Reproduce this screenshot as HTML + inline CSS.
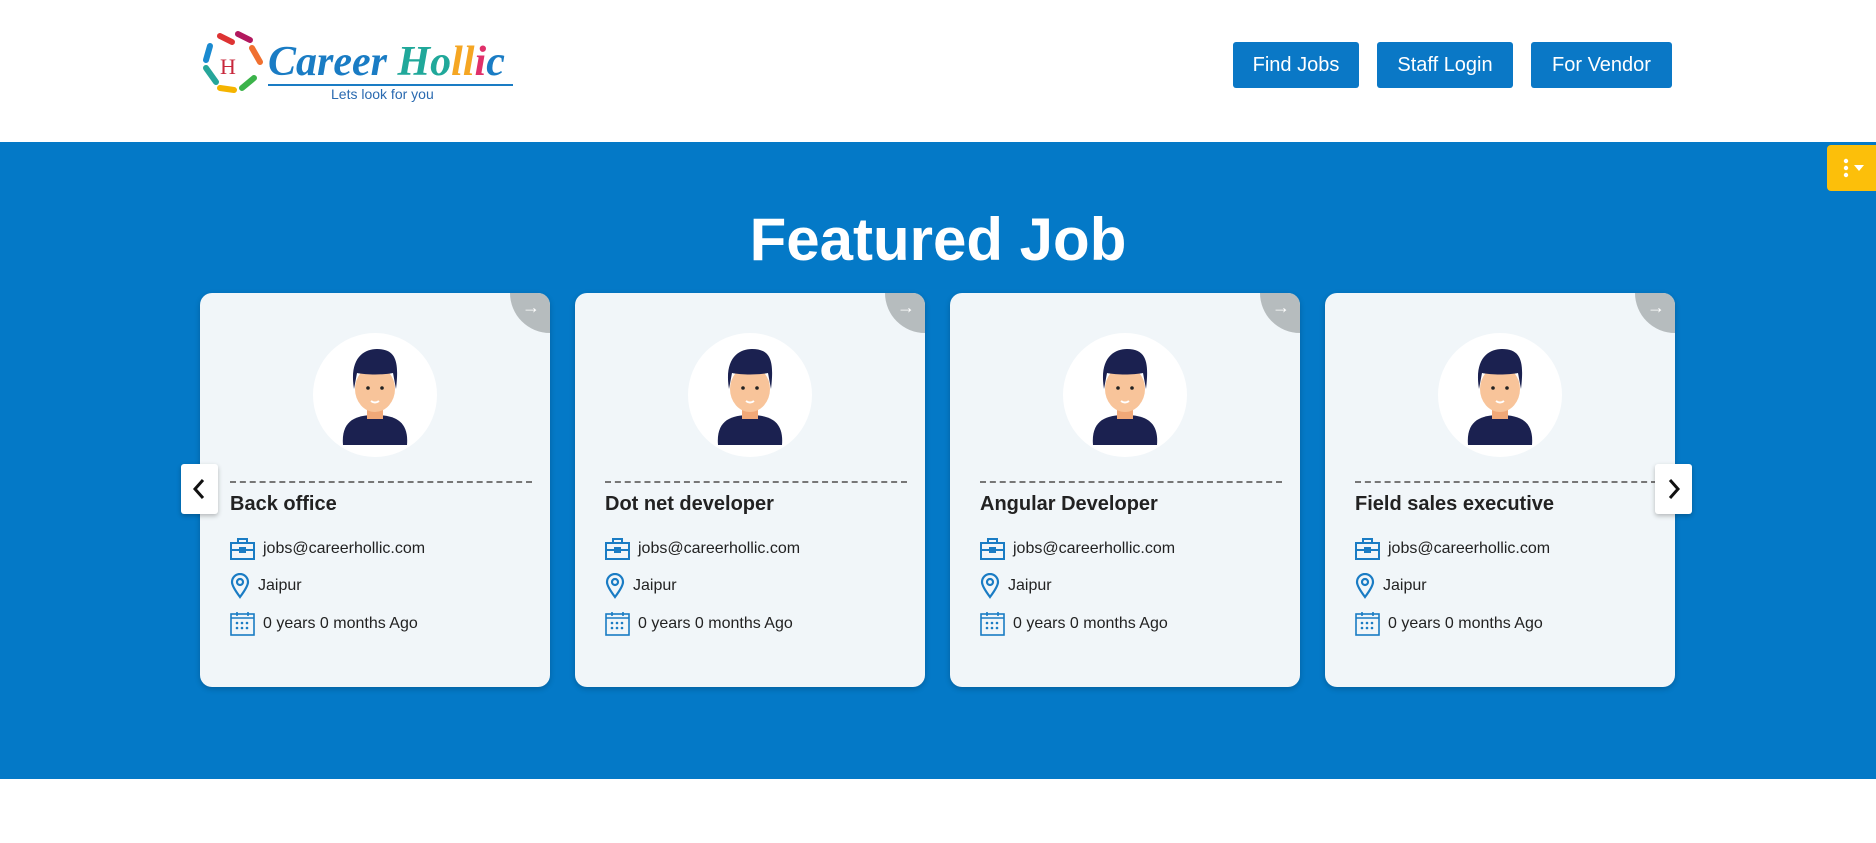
<!DOCTYPE html>
<html><head><style>
*{margin:0;padding:0;box-sizing:border-box}
body{width:1876px;height:843px;background:#fff;font-family:"Liberation Sans",sans-serif;position:relative;overflow:hidden}
.btn{position:absolute;top:42px;height:46px;background:#0a78c6;color:#fff;font-size:20px;line-height:46px;text-align:center;border-radius:3px}
.band{position:absolute;left:0;top:142px;width:1876px;height:637px;background:#0479c7}
h1{position:absolute;top:205px;left:0;width:1876px;text-align:center;color:#fff;font-size:60px;font-weight:bold}
.card{position:absolute;top:293px;width:350px;height:394px;background:#f1f6f9;border-radius:12px;overflow:hidden;box-shadow:0 2px 6px rgba(0,0,0,.2)}
.corner{position:absolute;right:-40px;top:-40px;width:80px;height:80px;border-radius:50%;background:#b6bcbe;color:#fff}
.corner span{position:absolute;left:12px;top:44px;font-size:18px}
.av{position:absolute;left:113px;top:40px;width:124px;height:124px;border-radius:50%;background:#fff}
.dash{position:absolute;left:30px;top:188px;width:302px;border-top:2px dashed #777}
.t{position:absolute;left:30px;top:200px;font-size:20px;font-weight:bold;color:#222}
.r{position:absolute;left:30px;font-size:16px;color:#222;display:flex;align-items:center}
.r svg{margin-right:8px}
.nav{position:absolute;top:464px;width:37px;height:50px;background:#fff;border-radius:3px;box-shadow:0 2px 5px rgba(0,0,0,.25)}
</style></head><body>
<div style="position:absolute;left:200px;top:26px;width:320px;height:76px">
<svg width="66" height="72" viewBox="0 0 66 72" style="position:absolute;left:0;top:2px">
<g stroke-width="6" stroke-linecap="round" fill="none">
<path d="M20 8 L32 14" stroke="#d33"/><path d="M38 6 L50 12" stroke="#b2185e"/><path d="M52 20 L60 34" stroke="#f07030"/>
<path d="M10 18 L6 32" stroke="#1a8ad0"/><path d="M6 40 L16 54" stroke="#26a69a"/><path d="M20 60 L34 62" stroke="#f5b400"/><path d="M42 60 L54 50" stroke="#3bb34a"/>
</g><text x="20" y="46" font-size="22" fill="#c8283c" font-family="Liberation Serif">H</text></svg>
<div style="position:absolute;left:68px;top:12px;font-family:'Liberation Serif',serif;font-size:42px;font-weight:bold;font-style:italic;color:#1a7cc4;white-space:nowrap">Career <span style="color:#20a89a">H</span><span style="color:#20a89a">o</span><span style="color:#f5a623">ll</span><span style="color:#e0306a">i</span>c</div>
<div style="position:absolute;left:68px;top:58px;width:245px;height:2px;background:#1a7cc4"></div>
<div style="position:absolute;left:131px;top:60px;font-size:14px;color:#2a6ab0">Lets look for you</div>
</div>
<div class="btn" style="left:1233px;width:126px">Find Jobs</div>
<div class="btn" style="left:1377px;width:136px">Staff Login</div>
<div class="btn" style="left:1531px;width:141px">For Vendor</div>
<div class="band"></div>
<div style="position:absolute;left:1827px;top:145px;width:49px;height:46px;background:#fcbf0a;border-radius:4px 0 0 4px"><svg width="49" height="46" viewBox="0 0 49 46"><g fill="#fff"><circle cx="19" cy="16" r="2.2"/><circle cx="19" cy="23" r="2.2"/><circle cx="19" cy="30" r="2.2"/><path d="M27 20 H37 L32 26 Z"/></g></svg></div>
<h1>Featured Job</h1>

<div class="card" style="left:200px"><div class="corner"><span>→</span></div><div class="av"><svg width="124" height="124" viewBox="0 0 124 124"><path d="M30 112 C28 88 42 82 62 82 C82 82 96 88 94 112 Z" fill="#1b2150"/><rect x="54" y="70" width="16" height="16" fill="#f0a878"/><ellipse cx="62" cy="56" rx="20" ry="23" fill="#f8c49a"/><path d="M41 56 C36 26 50 16 64 16 C84 16 86 30 83 56 L80 40 C70 42 54 42 44 40 Z" fill="#1b2150"/><circle cx="55" cy="55" r="1.8" fill="#222"/><circle cx="69" cy="55" r="1.8" fill="#222"/><path d="M58 68 Q62 71 66 68" stroke="#fff" stroke-width="2" fill="none"/></svg></div><div class="dash"></div><div class="t">Back office</div>
<div class="r" style="top:245px"><svg width="25" height="22" viewBox="0 0 25 22" fill="none" stroke="#1a7cc4" stroke-width="2"><rect x="1" y="5" width="23" height="16"/><rect x="8" y="1" width="9" height="4"/><path d="M1 12 H24"/><rect x="10" y="10" width="5" height="4" fill="#1a7cc4"/></svg>jobs@careerhollic.com</div>
<div class="r" style="top:280px"><svg width="20" height="26" viewBox="0 0 20 26" fill="none" stroke="#1a7cc4" stroke-width="2.2"><path d="M10 24 C4 16 2 12 2 9 A8 8 0 0 1 18 9 C18 12 16 16 10 24Z"/><circle cx="10" cy="9" r="3"/></svg>Jaipur</div>
<div class="r" style="top:318px"><svg width="25" height="25" viewBox="0 0 25 25" fill="none" stroke="#1a7cc4" stroke-width="1.6"><rect x="1" y="3" width="23" height="21"/><path d="M7 1v4M18 1v4M1 7h23"/><g fill="#1a7cc4" stroke="none"><circle cx="7" cy="12" r="1.3"/><circle cx="12" cy="12" r="1.3"/><circle cx="17" cy="12" r="1.3"/><circle cx="7" cy="17" r="1.3"/><circle cx="12" cy="17" r="1.3"/><circle cx="17" cy="17" r="1.3"/></g></svg>0 years 0 months Ago</div></div>

<div class="card" style="left:575px"><div class="corner"><span>→</span></div><div class="av"><svg width="124" height="124" viewBox="0 0 124 124"><path d="M30 112 C28 88 42 82 62 82 C82 82 96 88 94 112 Z" fill="#1b2150"/><rect x="54" y="70" width="16" height="16" fill="#f0a878"/><ellipse cx="62" cy="56" rx="20" ry="23" fill="#f8c49a"/><path d="M41 56 C36 26 50 16 64 16 C84 16 86 30 83 56 L80 40 C70 42 54 42 44 40 Z" fill="#1b2150"/><circle cx="55" cy="55" r="1.8" fill="#222"/><circle cx="69" cy="55" r="1.8" fill="#222"/><path d="M58 68 Q62 71 66 68" stroke="#fff" stroke-width="2" fill="none"/></svg></div><div class="dash"></div><div class="t">Dot net developer</div>
<div class="r" style="top:245px"><svg width="25" height="22" viewBox="0 0 25 22" fill="none" stroke="#1a7cc4" stroke-width="2"><rect x="1" y="5" width="23" height="16"/><rect x="8" y="1" width="9" height="4"/><path d="M1 12 H24"/><rect x="10" y="10" width="5" height="4" fill="#1a7cc4"/></svg>jobs@careerhollic.com</div>
<div class="r" style="top:280px"><svg width="20" height="26" viewBox="0 0 20 26" fill="none" stroke="#1a7cc4" stroke-width="2.2"><path d="M10 24 C4 16 2 12 2 9 A8 8 0 0 1 18 9 C18 12 16 16 10 24Z"/><circle cx="10" cy="9" r="3"/></svg>Jaipur</div>
<div class="r" style="top:318px"><svg width="25" height="25" viewBox="0 0 25 25" fill="none" stroke="#1a7cc4" stroke-width="1.6"><rect x="1" y="3" width="23" height="21"/><path d="M7 1v4M18 1v4M1 7h23"/><g fill="#1a7cc4" stroke="none"><circle cx="7" cy="12" r="1.3"/><circle cx="12" cy="12" r="1.3"/><circle cx="17" cy="12" r="1.3"/><circle cx="7" cy="17" r="1.3"/><circle cx="12" cy="17" r="1.3"/><circle cx="17" cy="17" r="1.3"/></g></svg>0 years 0 months Ago</div></div>

<div class="card" style="left:950px"><div class="corner"><span>→</span></div><div class="av"><svg width="124" height="124" viewBox="0 0 124 124"><path d="M30 112 C28 88 42 82 62 82 C82 82 96 88 94 112 Z" fill="#1b2150"/><rect x="54" y="70" width="16" height="16" fill="#f0a878"/><ellipse cx="62" cy="56" rx="20" ry="23" fill="#f8c49a"/><path d="M41 56 C36 26 50 16 64 16 C84 16 86 30 83 56 L80 40 C70 42 54 42 44 40 Z" fill="#1b2150"/><circle cx="55" cy="55" r="1.8" fill="#222"/><circle cx="69" cy="55" r="1.8" fill="#222"/><path d="M58 68 Q62 71 66 68" stroke="#fff" stroke-width="2" fill="none"/></svg></div><div class="dash"></div><div class="t">Angular Developer</div>
<div class="r" style="top:245px"><svg width="25" height="22" viewBox="0 0 25 22" fill="none" stroke="#1a7cc4" stroke-width="2"><rect x="1" y="5" width="23" height="16"/><rect x="8" y="1" width="9" height="4"/><path d="M1 12 H24"/><rect x="10" y="10" width="5" height="4" fill="#1a7cc4"/></svg>jobs@careerhollic.com</div>
<div class="r" style="top:280px"><svg width="20" height="26" viewBox="0 0 20 26" fill="none" stroke="#1a7cc4" stroke-width="2.2"><path d="M10 24 C4 16 2 12 2 9 A8 8 0 0 1 18 9 C18 12 16 16 10 24Z"/><circle cx="10" cy="9" r="3"/></svg>Jaipur</div>
<div class="r" style="top:318px"><svg width="25" height="25" viewBox="0 0 25 25" fill="none" stroke="#1a7cc4" stroke-width="1.6"><rect x="1" y="3" width="23" height="21"/><path d="M7 1v4M18 1v4M1 7h23"/><g fill="#1a7cc4" stroke="none"><circle cx="7" cy="12" r="1.3"/><circle cx="12" cy="12" r="1.3"/><circle cx="17" cy="12" r="1.3"/><circle cx="7" cy="17" r="1.3"/><circle cx="12" cy="17" r="1.3"/><circle cx="17" cy="17" r="1.3"/></g></svg>0 years 0 months Ago</div></div>

<div class="card" style="left:1325px"><div class="corner"><span>→</span></div><div class="av"><svg width="124" height="124" viewBox="0 0 124 124"><path d="M30 112 C28 88 42 82 62 82 C82 82 96 88 94 112 Z" fill="#1b2150"/><rect x="54" y="70" width="16" height="16" fill="#f0a878"/><ellipse cx="62" cy="56" rx="20" ry="23" fill="#f8c49a"/><path d="M41 56 C36 26 50 16 64 16 C84 16 86 30 83 56 L80 40 C70 42 54 42 44 40 Z" fill="#1b2150"/><circle cx="55" cy="55" r="1.8" fill="#222"/><circle cx="69" cy="55" r="1.8" fill="#222"/><path d="M58 68 Q62 71 66 68" stroke="#fff" stroke-width="2" fill="none"/></svg></div><div class="dash"></div><div class="t">Field sales executive</div>
<div class="r" style="top:245px"><svg width="25" height="22" viewBox="0 0 25 22" fill="none" stroke="#1a7cc4" stroke-width="2"><rect x="1" y="5" width="23" height="16"/><rect x="8" y="1" width="9" height="4"/><path d="M1 12 H24"/><rect x="10" y="10" width="5" height="4" fill="#1a7cc4"/></svg>jobs@careerhollic.com</div>
<div class="r" style="top:280px"><svg width="20" height="26" viewBox="0 0 20 26" fill="none" stroke="#1a7cc4" stroke-width="2.2"><path d="M10 24 C4 16 2 12 2 9 A8 8 0 0 1 18 9 C18 12 16 16 10 24Z"/><circle cx="10" cy="9" r="3"/></svg>Jaipur</div>
<div class="r" style="top:318px"><svg width="25" height="25" viewBox="0 0 25 25" fill="none" stroke="#1a7cc4" stroke-width="1.6"><rect x="1" y="3" width="23" height="21"/><path d="M7 1v4M18 1v4M1 7h23"/><g fill="#1a7cc4" stroke="none"><circle cx="7" cy="12" r="1.3"/><circle cx="12" cy="12" r="1.3"/><circle cx="17" cy="12" r="1.3"/><circle cx="7" cy="17" r="1.3"/><circle cx="12" cy="17" r="1.3"/><circle cx="17" cy="17" r="1.3"/></g></svg>0 years 0 months Ago</div></div>

<div class="nav" style="left:181px"><svg width="37" height="50" viewBox="0 0 37 50"><path d="M22 16 L14 25 L22 34" stroke="#111" stroke-width="3" fill="none"/></svg></div>
<div class="nav" style="left:1655px"><svg width="37" height="50" viewBox="0 0 37 50"><path d="M15 16 L23 25 L15 34" stroke="#111" stroke-width="3" fill="none"/></svg></div>
</body></html>
